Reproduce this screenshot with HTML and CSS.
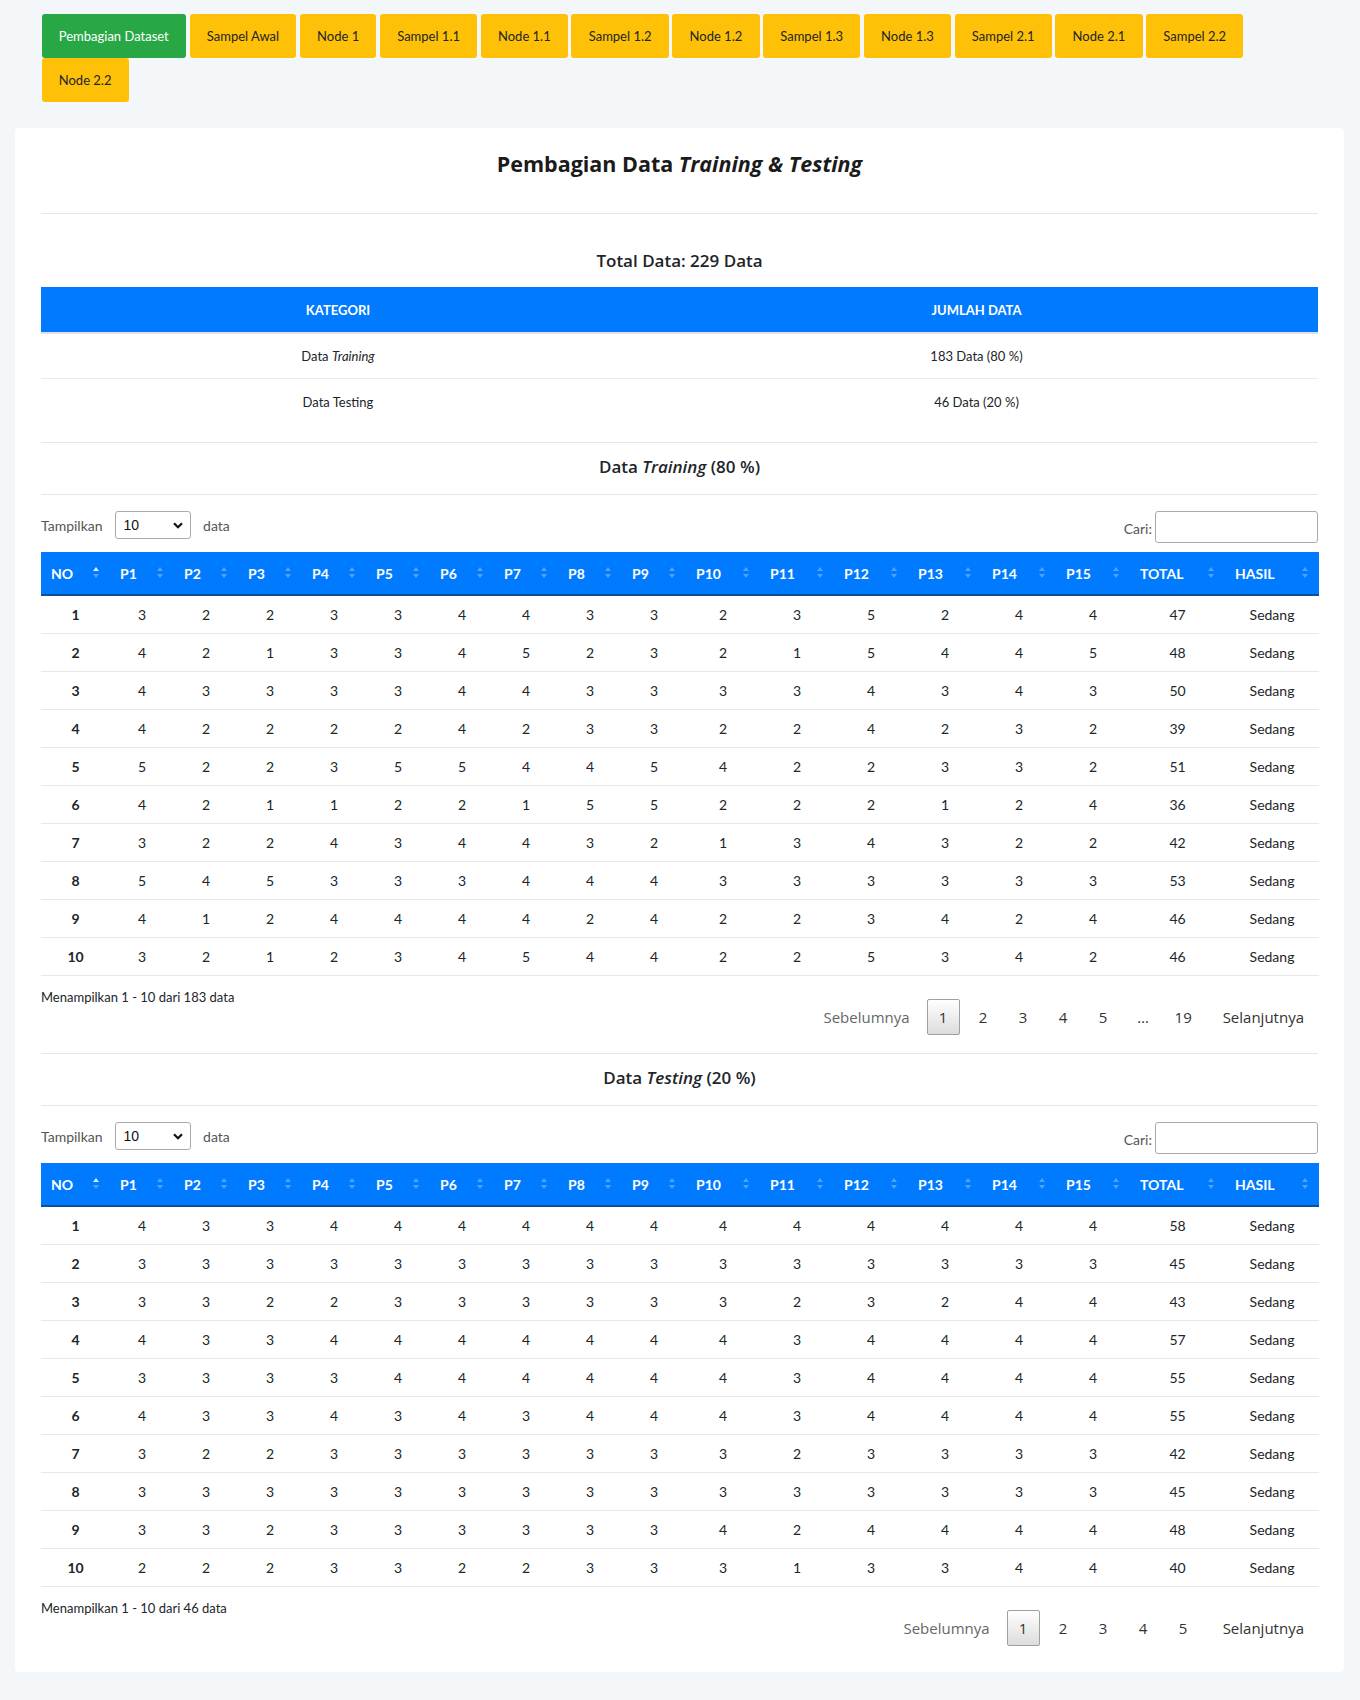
FILE: index.html
```html
<!DOCTYPE html>
<html lang="id">
<head>
<meta charset="utf-8">
<title>Pembagian Dataset</title>
<link rel="stylesheet" href="styles.css">
</head>
<body>
<div class="page">
  <nav class="nav">
    <a class="nav-btn active">Pembagian Dataset</a>
    <a class="nav-btn">Sampel Awal</a>
    <a class="nav-btn">Node 1</a>
    <a class="nav-btn">Sampel 1.1</a>
    <a class="nav-btn">Node 1.1</a>
    <a class="nav-btn">Sampel 1.2</a>
    <a class="nav-btn">Node 1.2</a>
    <a class="nav-btn">Sampel 1.3</a>
    <a class="nav-btn">Node 1.3</a>
    <a class="nav-btn">Sampel 2.1</a>
    <a class="nav-btn">Node 2.1</a>
    <a class="nav-btn">Sampel 2.2</a>
    <a class="nav-btn">Node 2.2</a>
  </nav>

  <main class="card">
    <h1 class="title">Pembagian Data <i>Training &amp; Testing</i></h1>
    <hr class="rule rule-title">

    <h2 class="total">Total Data: 229 Data</h2>
    <table class="sum">
      <colgroup><col class="c-kat"><col class="c-jml"></colgroup>
      <thead><tr><th>KATEGORI</th><th>JUMLAH DATA</th></tr></thead>
      <tbody>
        <tr><td>Data <i>Training</i></td><td>183 Data (80 %)</td></tr>
        <tr><td>Data Testing</td><td>46 Data (20 %)</td></tr>
      </tbody>
    </table>

    <section class="block">
      <hr class="rule">
      <h2 class="sec-title">Data <i>Training</i> (80 %)</h2>
      <hr class="rule rule-under">
      <div class="controls">
        <div class="len">
          <span>Tampilkan</span>
          <div class="sel"><span>10</span><svg width="10" height="7" viewBox="0 0 10 7"><polyline points="1,1.2 5,5.2 9,1.2" fill="none" stroke="#111" stroke-width="2.2"/></svg></div>
          <span>data</span>
        </div>
        <div class="search"><span>Cari:</span><div class="inp"></div></div>
      </div>
      <table class="dt">
        <colgroup><col class="w-no"><col class="w-p"><col class="w-p"><col class="w-p"><col class="w-p"><col class="w-p"><col class="w-p"><col class="w-p"><col class="w-p"><col class="w-p"><col class="w-q"><col class="w-q"><col class="w-q"><col class="w-q"><col class="w-q"><col class="w-q"><col class="w-tot"><col class="w-has"></colgroup>
        <thead><tr><th class="h asc">NO</th><th class="h">P1</th><th class="h">P2</th><th class="h">P3</th><th class="h">P4</th><th class="h">P5</th><th class="h">P6</th><th class="h">P7</th><th class="h">P8</th><th class="h">P9</th><th class="h">P10</th><th class="h">P11</th><th class="h">P12</th><th class="h">P13</th><th class="h">P14</th><th class="h">P15</th><th class="h">TOTAL</th><th class="h">HASIL</th></tr></thead>
        <tbody>
          <tr><th>1</th><td>3</td><td>2</td><td>2</td><td>3</td><td>3</td><td>4</td><td>4</td><td>3</td><td>3</td><td>2</td><td>3</td><td>5</td><td>2</td><td>4</td><td>4</td><td>47</td><td>Sedang</td></tr>
          <tr><th>2</th><td>4</td><td>2</td><td>1</td><td>3</td><td>3</td><td>4</td><td>5</td><td>2</td><td>3</td><td>2</td><td>1</td><td>5</td><td>4</td><td>4</td><td>5</td><td>48</td><td>Sedang</td></tr>
          <tr><th>3</th><td>4</td><td>3</td><td>3</td><td>3</td><td>3</td><td>4</td><td>4</td><td>3</td><td>3</td><td>3</td><td>3</td><td>4</td><td>3</td><td>4</td><td>3</td><td>50</td><td>Sedang</td></tr>
          <tr><th>4</th><td>4</td><td>2</td><td>2</td><td>2</td><td>2</td><td>4</td><td>2</td><td>3</td><td>3</td><td>2</td><td>2</td><td>4</td><td>2</td><td>3</td><td>2</td><td>39</td><td>Sedang</td></tr>
          <tr><th>5</th><td>5</td><td>2</td><td>2</td><td>3</td><td>5</td><td>5</td><td>4</td><td>4</td><td>5</td><td>4</td><td>2</td><td>2</td><td>3</td><td>3</td><td>2</td><td>51</td><td>Sedang</td></tr>
          <tr><th>6</th><td>4</td><td>2</td><td>1</td><td>1</td><td>2</td><td>2</td><td>1</td><td>5</td><td>5</td><td>2</td><td>2</td><td>2</td><td>1</td><td>2</td><td>4</td><td>36</td><td>Sedang</td></tr>
          <tr><th>7</th><td>3</td><td>2</td><td>2</td><td>4</td><td>3</td><td>4</td><td>4</td><td>3</td><td>2</td><td>1</td><td>3</td><td>4</td><td>3</td><td>2</td><td>2</td><td>42</td><td>Sedang</td></tr>
          <tr><th>8</th><td>5</td><td>4</td><td>5</td><td>3</td><td>3</td><td>3</td><td>4</td><td>4</td><td>4</td><td>3</td><td>3</td><td>3</td><td>3</td><td>3</td><td>3</td><td>53</td><td>Sedang</td></tr>
          <tr><th>9</th><td>4</td><td>1</td><td>2</td><td>4</td><td>4</td><td>4</td><td>4</td><td>2</td><td>4</td><td>2</td><td>2</td><td>3</td><td>4</td><td>2</td><td>4</td><td>46</td><td>Sedang</td></tr>
          <tr><th>10</th><td>3</td><td>2</td><td>1</td><td>2</td><td>3</td><td>4</td><td>5</td><td>4</td><td>4</td><td>2</td><td>2</td><td>5</td><td>3</td><td>4</td><td>2</td><td>46</td><td>Sedang</td></tr>
        </tbody>
      </table>
      <div class="foot">
        <div class="info">Menampilkan 1 - 10 dari 183 data</div>
        <div class="pager">
          <span class="pg-prev">Sebelumnya</span>
          <span class="pg cur">1</span>
          <span class="pg">2</span>
          <span class="pg">3</span>
          <span class="pg">4</span>
          <span class="pg">5</span>
          <span class="pg">…</span>
          <span class="pg">19</span>
          <span class="pg-next">Selanjutnya</span>
        </div>
      </div>
    </section>

    <section class="block">
      <hr class="rule">
      <h2 class="sec-title">Data <i>Testing</i> (20 %)</h2>
      <hr class="rule rule-under">
      <div class="controls">
        <div class="len">
          <span>Tampilkan</span>
          <div class="sel"><span>10</span><svg width="10" height="7" viewBox="0 0 10 7"><polyline points="1,1.2 5,5.2 9,1.2" fill="none" stroke="#111" stroke-width="2.2"/></svg></div>
          <span>data</span>
        </div>
        <div class="search"><span>Cari:</span><div class="inp"></div></div>
      </div>
      <table class="dt">
        <colgroup><col class="w-no"><col class="w-p"><col class="w-p"><col class="w-p"><col class="w-p"><col class="w-p"><col class="w-p"><col class="w-p"><col class="w-p"><col class="w-p"><col class="w-q"><col class="w-q"><col class="w-q"><col class="w-q"><col class="w-q"><col class="w-q"><col class="w-tot"><col class="w-has"></colgroup>
        <thead><tr><th class="h asc">NO</th><th class="h">P1</th><th class="h">P2</th><th class="h">P3</th><th class="h">P4</th><th class="h">P5</th><th class="h">P6</th><th class="h">P7</th><th class="h">P8</th><th class="h">P9</th><th class="h">P10</th><th class="h">P11</th><th class="h">P12</th><th class="h">P13</th><th class="h">P14</th><th class="h">P15</th><th class="h">TOTAL</th><th class="h">HASIL</th></tr></thead>
        <tbody>
          <tr><th>1</th><td>4</td><td>3</td><td>3</td><td>4</td><td>4</td><td>4</td><td>4</td><td>4</td><td>4</td><td>4</td><td>4</td><td>4</td><td>4</td><td>4</td><td>4</td><td>58</td><td>Sedang</td></tr>
          <tr><th>2</th><td>3</td><td>3</td><td>3</td><td>3</td><td>3</td><td>3</td><td>3</td><td>3</td><td>3</td><td>3</td><td>3</td><td>3</td><td>3</td><td>3</td><td>3</td><td>45</td><td>Sedang</td></tr>
          <tr><th>3</th><td>3</td><td>3</td><td>2</td><td>2</td><td>3</td><td>3</td><td>3</td><td>3</td><td>3</td><td>3</td><td>2</td><td>3</td><td>2</td><td>4</td><td>4</td><td>43</td><td>Sedang</td></tr>
          <tr><th>4</th><td>4</td><td>3</td><td>3</td><td>4</td><td>4</td><td>4</td><td>4</td><td>4</td><td>4</td><td>4</td><td>3</td><td>4</td><td>4</td><td>4</td><td>4</td><td>57</td><td>Sedang</td></tr>
          <tr><th>5</th><td>3</td><td>3</td><td>3</td><td>3</td><td>4</td><td>4</td><td>4</td><td>4</td><td>4</td><td>4</td><td>3</td><td>4</td><td>4</td><td>4</td><td>4</td><td>55</td><td>Sedang</td></tr>
          <tr><th>6</th><td>4</td><td>3</td><td>3</td><td>4</td><td>3</td><td>4</td><td>3</td><td>4</td><td>4</td><td>4</td><td>3</td><td>4</td><td>4</td><td>4</td><td>4</td><td>55</td><td>Sedang</td></tr>
          <tr><th>7</th><td>3</td><td>2</td><td>2</td><td>3</td><td>3</td><td>3</td><td>3</td><td>3</td><td>3</td><td>3</td><td>2</td><td>3</td><td>3</td><td>3</td><td>3</td><td>42</td><td>Sedang</td></tr>
          <tr><th>8</th><td>3</td><td>3</td><td>3</td><td>3</td><td>3</td><td>3</td><td>3</td><td>3</td><td>3</td><td>3</td><td>3</td><td>3</td><td>3</td><td>3</td><td>3</td><td>45</td><td>Sedang</td></tr>
          <tr><th>9</th><td>3</td><td>3</td><td>2</td><td>3</td><td>3</td><td>3</td><td>3</td><td>3</td><td>3</td><td>4</td><td>2</td><td>4</td><td>4</td><td>4</td><td>4</td><td>48</td><td>Sedang</td></tr>
          <tr><th>10</th><td>2</td><td>2</td><td>2</td><td>3</td><td>3</td><td>2</td><td>2</td><td>3</td><td>3</td><td>3</td><td>1</td><td>3</td><td>3</td><td>4</td><td>4</td><td>40</td><td>Sedang</td></tr>
        </tbody>
      </table>
      <div class="foot">
        <div class="info">Menampilkan 1 - 10 dari 46 data</div>
        <div class="pager">
          <span class="pg-prev">Sebelumnya</span>
          <span class="pg cur">1</span>
          <span class="pg">2</span>
          <span class="pg">3</span>
          <span class="pg">4</span>
          <span class="pg">5</span>
          <span class="pg-next">Selanjutnya</span>
        </div>
      </div>
    </section>
  </main>
</div>
</body>
</html>
```

FILE: styles.css
```css
* { box-sizing: border-box; }

body {
  margin: 0;
  background: #f3f7fa;
  font-family: Lato, "Liberation Sans", sans-serif;
  color: #212529;
}

.page {
  padding: 14px 16px 28px 15px;
}

/* top navigation buttons */
.nav {
  display: flex;
  flex-wrap: wrap;
  column-gap: 3.5px;
  row-gap: 0.5px;
  padding: 0 26.5px;
}

.nav-btn {
  height: 43.5px;
  padding: 0 17.25px;
  display: flex;
  align-items: center;
  font-size: 13px;
  border-radius: 3px;
  background: #ffc107;
  color: #212529;
  text-decoration: none;
}

.nav-btn.active {
  background: #28a745;
  color: #fff;
}

/* card */
.card {
  margin-top: 26px;
  background: #fff;
  border-radius: 4px;
  padding: 21px 26px 26px;
}

.title {
  margin: 0;
  height: 30px;
  line-height: 30px;
  text-align: center;
  font-family: "Open Sans", sans-serif;
  font-weight: 700;
  font-size: 21.5px;
  color: #1b1b1b;
}

.rule {
  margin: 0;
  border: 0;
  border-top: 1px solid #e6e6e6;
}

.rule-title { margin-top: 34px; }

.total {
  margin: 35px 0 14.7px;
  height: 24px;
  line-height: 24px;
  text-align: center;
  font-family: "Open Sans", sans-serif;
  font-weight: 600;
  font-size: 17px;
  color: #212529;
}

/* summary table */
.sum {
  width: 100%;
  table-layout: fixed;
  border-collapse: separate;
  border-spacing: 0;
}

.c-kat { width: 594px; }

.sum th {
  height: 47px;
  padding: 0;
  background: #007bff;
  color: #fff;
  font-size: 13px;
  font-weight: 700;
  border-bottom: 2px solid #dee2e6;
}

.sum td {
  height: 45px;
  padding: 0;
  text-align: center;
  font-size: 13px;
  border-bottom: 1px solid #e9ecef;
}

.sum tr:last-child td { border-bottom: 0; }

/* data sections */
.block > .rule:first-child { margin-top: 17.7px; }

.sec-title {
  margin: 12.5px 0 0;
  height: 24px;
  line-height: 24px;
  text-align: center;
  font-family: "Open Sans", sans-serif;
  font-weight: 600;
  font-size: 17px;
  color: #212529;
}

.rule-under { margin-top: 15px; }

.controls {
  margin-top: 16px;
  display: flex;
  justify-content: space-between;
  align-items: flex-start;
  font-size: 14px;
  color: #555;
}

.len {
  height: 28px;
  display: flex;
  align-items: center;
}

.sel {
  width: 76px;
  height: 28px;
  margin: 0 12.5px 0 12px;
  padding: 0 7px 0 8px;
  display: flex;
  align-items: center;
  justify-content: space-between;
  border: 1px solid #aaa;
  border-radius: 3px;
  font-family: "Liberation Sans", Arial, sans-serif;
  font-size: 14px;
  color: #111;
}

.search {
  height: 32px;
  display: flex;
  align-items: center;
  padding-top: 3px;
}

.inp {
  width: 163px;
  height: 32px;
  margin-left: 3px;
  margin-top: -3px;
  border: 1px solid #aaa;
  border-radius: 3px;
  background: #fff;
}

/* data table */
.dt {
  width: 100%;
  margin-top: 8.7px;
  table-layout: fixed;
  border-collapse: separate;
  border-spacing: 0;
}

.w-no { width: 69px; }
.w-p { width: 64px; }
.w-q { width: 74px; }
.w-tot { width: 95px; }
.w-has { width: 94px; }

.dt th.h {
  position: relative;
  height: 44px;
  padding: 0 10px;
  text-align: left;
  background: #007bff;
  color: #fff;
  font-size: 14px;
  font-weight: 700;
  border-bottom: 2px solid #0d4f99;
}

.dt th.h::before,
.dt th.h::after {
  content: "";
  position: absolute;
  right: 11.5px;
  border-left: 3px solid transparent;
  border-right: 3px solid transparent;
}

.dt th.h::before {
  top: 15px;
  border-bottom: 4.5px solid rgba(255, 255, 255, 0.3);
}

.dt th.h::after {
  top: 22px;
  border-top: 4.5px solid rgba(255, 255, 255, 0.3);
}

.dt th.h.asc::before {
  border-bottom-color: rgba(255, 255, 255, 0.85);
}

.dt tbody th,
.dt tbody td {
  height: 38px;
  padding: 0;
  text-align: center;
  font-size: 14px;
  border-bottom: 1px solid #e6e8eb;
}

.dt tbody th { font-weight: 700; }
.dt tbody td { font-weight: 400; }

/* footer: info + pagination */
.foot {
  display: flex;
  justify-content: space-between;
  align-items: flex-start;
  margin-bottom: 13px;
}

.info {
  margin-top: 11px;
  font-size: 13px;
  line-height: 20px;
}

.block:last-child .foot { margin-bottom: 0; }

.pager {
  margin-top: 22.5px;
  display: flex;
  align-items: center;
  font-family: "Open Sans", sans-serif;
  font-size: 15px;
  color: #333;
}

.pg-prev {
  padding: 0 10px 0 14px;
  color: #666;
}

.pg {
  width: 33px;
  height: 36.7px;
  margin-left: 7px;
  display: flex;
  align-items: center;
  justify-content: center;
  border: 1px solid transparent;
  border-radius: 2px;
}

.pg.cur {
  border-color: #a0a0a0;
  background: linear-gradient(to bottom, #ffffff 0%, #dcdcdc 100%);
}

.pg-next {
  margin-left: 7px;
  padding: 0 14px 0 16px;
}
```
